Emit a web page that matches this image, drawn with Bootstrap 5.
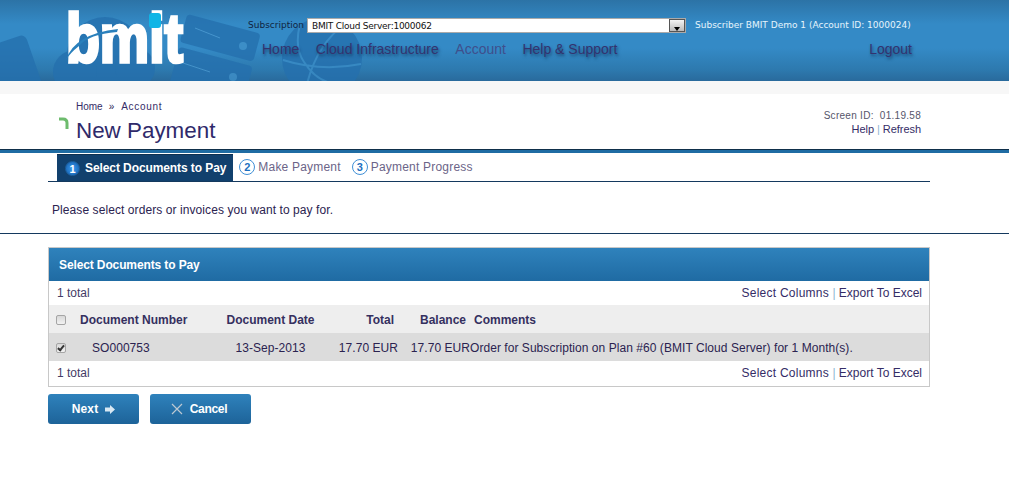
<!DOCTYPE html>
<html lang="en">
<head>
    <meta charset="UTF-8">
    <meta name="viewport" content="width=device-width, initial-scale=1.0">
    <title>New Payment</title>
    <link rel="stylesheet" href="https://cdn.jsdelivr.net/npm/bootstrap@5.3.0/dist/css/bootstrap.min.css">
    <style>
        body { font-family: "Liberation Sans", Arial, sans-serif; font-size: 12px; color: #2b2350; background: #fff; }
        a { color: #342c66; text-decoration: none; }
        .top-head { position: relative; height: 81px; background: linear-gradient(#2c73a6 0, #348ac6 24px, #348ac6 48px, #2d79ae 70px, #296a9c 81px); overflow: hidden; }
        .top-art { position: absolute; left: 0; top: 0; }
        .top-logo { position: relative; width: 248px; flex: none; }
        .top-right { position: relative; flex: 1; }
        .sub-line { height: 17px; margin-top: 17px; font-family: "DejaVu Sans", sans-serif; font-size: 9px; white-space: nowrap; }
        .sub-label { color: #10243f; width: 59px; }
        .sub-select { width: 379px; height: 15px; background: #fff; border: 1px solid #aaa; color: #111; padding-left: 4px; line-height: 12px; letter-spacing: -.25px; }
        .sub-arrow { width: 16px; height: 13px; background: linear-gradient(#f4f4f4, #bbb); border: 1px solid #555; margin-left: auto; position: relative; }
        .sub-arrow::after { content: ""; position: absolute; left: 4px; top: 7px; border: 3px solid transparent; border-top: 4px solid #000; border-bottom: 0; }
        .sub-user { color: #e6f4fc; margin-left: 9px; }
        .top-menu { margin-top: 5px; padding-left: 14px; width: 664px; font-size: 14px; }
        .top-menu a { color: #33336f; text-shadow: 1px 2px 3px rgba(18, 58, 96, .8); margin-right: 16.5px; }
        .top-menu a.now { color: #3f4f8c; text-shadow: none; }
        .top-menu a.out { margin-left: auto; margin-right: 0; }
        .strip { height: 13px; background: #f7f7f7; }
        .page-head { height: 55px; padding-left: 76px; padding-right: 88px; }
        .crumbs { font-size: 10px; padding-top: 6px; line-height: 13px; }
        .crumb-sep { margin: 0 7px 0 6px; }
        .crumb-end { letter-spacing: .7px; }
        .page-name { font-size: 22.4px; line-height: 28px; margin: 4px 0 0; font-weight: 400; color: #2f2a6a; }
        .spin { position: absolute; left: 59px; top: 117px; }
        .screen-id { text-align: right; font-size: 10px; padding-top: 15px; color: #55556a; line-height: 14px; letter-spacing: .28px; }
        .screen-links { font-size: 11px; letter-spacing: -.05px; line-height: 13px; }
        .sep { color: #8fb6d2; }
        .blue-rule { height: 4px; background: #1f6ca3; border-top: 1px solid #0f2f4a; }
        .steps { margin: 1px 79px 0 48px; height: 28px; border-bottom: 1px solid #14395e; padding-left: 9px; }
        .step { height: 27px; display: flex; align-items: center; gap: 3px; color: #6b6488; margin-right: 11px; letter-spacing: .2px; padding-bottom: 2px; }
        .step.on { background: #11406d; border-top: 1px solid #0e3050; color: #fff; font-weight: 700; padding: 0 7px 0 8px; gap: 5px; margin-right: 6px; letter-spacing: -.09px; }
        .step-num { width: 16px; height: 16px; border-radius: 50%; border: 1px solid #3f8fd6; background: #fff; color: #1a6fc0; font-size: 11px; font-weight: 700; line-height: 14px; text-align: center; letter-spacing: 0; }
        .step.on .step-num { width: 15px; height: 15px; background: radial-gradient(#3a9cf0, #125aa8); color: #fff; border-color: #1b5f9e; }
        .intro { height: 52px; padding: 21px 0 0 52px; line-height: 14px; border-bottom: 1px solid #14395e; letter-spacing: .08px; }
        .doc-panel { margin: 13px 79px 0 48px; border: 1px solid #c8c8c8; }
        .doc-title { height: 33px; background: linear-gradient(#2f82bc, #1f6ba3); color: #fff; font-weight: 700; line-height: 34px; padding-left: 10px; letter-spacing: -.12px; }
        .doc-bar { height: 24px; padding: 0 7px 0 8px; line-height: 24px; color: #443c66; }
        .doc-bar.last { height: 25px; }
        .doc-wide { letter-spacing: .25px; }
        .doc-grid { --bs-table-bg: transparent; margin: 0; table-layout: fixed; font-size: 12px; color: inherit; }
        .doc-grid th, .doc-grid td { padding: 1px 0 0; border: 0; vertical-align: middle; white-space: nowrap; }
        .doc-grid thead tr { height: 28px; background: #eeeeee; color: #35305f; }
        .doc-grid thead th.text-end { padding-right: 4px; }
        .doc-grid tbody tr { height: 28px; background: #dcdcdc; letter-spacing: .05px; }
        .doc-check { width: 10px; height: 10px; margin: 0 0 0 7px; display: block; appearance: none; border: 1px solid #a5a5a5; border-radius: 2px; background: linear-gradient(#d8d8d8, #f2f2f2); position: relative; }
        .doc-check:checked::after { content: ""; position: absolute; left: 2px; top: 0; width: 4px; height: 7px; border: solid #333; border-width: 0 2px 2px 0; transform: rotate(40deg); }
        .doc-so { padding-left: 12px !important; }
        .doc-actions { margin: 7px 0 0 48px; gap: 11px; }
        .act-btn { height: 30px; border-radius: 3px; background: linear-gradient(#2f82bc, #1d6399); color: #fff; font-weight: 700; border: 0; padding: 0; display: flex; align-items: center; justify-content: center; gap: 7px; font-size: 12px; }
        .btn-next { width: 91px; letter-spacing: .15px; }
        .btn-stop { width: 101px; letter-spacing: -.3px; padding-right: 3px; }
    </style>
</head>
<body>
    <!-- header -->
    <div class="top-head d-flex">
        <svg class="top-art" width="1009" height="81" fill="#2570ae" opacity=".8">
            <rect x="-40" y="34" width="65" height="70" rx="6" transform="rotate(-19 25 34)"/>
            <circle cx="105" cy="55" r="38"/><circle cx="75" cy="72" r="22"/><circle cx="135" cy="68" r="20"/>
            <g transform="rotate(15 187 15)"><rect x="187" y="14" width="76" height="29" rx="4"/></g>
            <g transform="rotate(15 180 48)"><rect x="179" y="47" width="76" height="40" rx="4"/></g>
            <path d="M195 28l25 10M180 62l30 10" stroke="#4a98cf" stroke-width="1" fill="none"/>
            <circle cx="243" cy="46" r="4" fill="#3f8fc8"/><circle cx="233" cy="77" r="4" fill="#3f8fc8"/>
            <circle cx="322" cy="58" r="40"/>
            <path d="M283 60q38 12 78 4M345 24q-28 20 -38 60M300 24q-6 24 4 38q14 22 36 22" stroke="#3a8cc6" stroke-width="2" fill="none"/>
        </svg>
        <div class="top-logo">
            <svg width="248" height="81">
                <text x="66" y="62" font-family="Liberation Sans" font-weight="700" font-size="68" fill="#fff" stroke="#fff" stroke-width="3.500" textLength="117" lengthAdjust="spacingAndGlyphs">bmit</text>
                <rect x="149" y="13" width="12" height="15" rx="3" fill="#10b5e6"/>
                <path d="M66 60q8-26 52-31l-1 3q-28 2-38 14q-9 7-13 14z" fill="#2a80bc"/>
            </svg>
        </div>
        <div class="top-right">
            <div class="sub-line d-flex align-items-center">
                <span class="sub-label">Subscription</span>
                <div class="sub-select d-flex align-items-center">BMIT Cloud Server:1000062<span class="sub-arrow"></span></div>
                <span class="sub-user">Subscriber BMIT Demo 1 (Account ID: 1000024)</span>
            </div>
            <div class="top-menu d-flex">
                <a href="#">Home</a>
                <a href="#">Cloud Infrastructure</a>
                <a href="#" class="now">Account</a>
                <a href="#">Help &amp; Support</a>
                <a href="#" class="out">Logout</a>
            </div>
        </div>
    </div>
    <div class="strip"></div>

    <div class="page-head d-flex justify-content-between">
        <div>
            <div class="crumbs"><a href="#">Home</a><span class="crumb-sep">»</span><a href="#" class="crumb-end">Account</a></div>
            <h1 class="page-name">New Payment</h1>
        </div>
        <div class="screen-id">
            <div>Screen ID: &nbsp;01.19.58</div>
            <div class="screen-links"><a href="#">Help</a> <span class="sep">|</span> <a href="#">Refresh</a></div>
        </div>
    </div>
    <svg class="spin" width="10" height="12"><path d="M0 2h4q4 0 4 4v6" stroke="#6dbb6d" stroke-width="3" fill="none"/></svg>
    <div class="blue-rule"></div>

    <div class="steps d-flex">
        <div class="step on"><span class="step-num">1</span>Select Documents to Pay</div>
        <div class="step"><span class="step-num">2</span>Make Payment</div>
        <div class="step"><span class="step-num">3</span>Payment Progress</div>
    </div>
    <div class="intro">Please select orders or invoices you want to pay for.</div>

    <div class="doc-panel">
        <div class="doc-title">Select Documents to Pay</div>
        <div class="doc-bar d-flex justify-content-between">
            <span>1 total</span>
            <span><a href="#" class="doc-wide">Select Columns</a> <span class="sep">|</span> <a href="#">Export To Excel</a></span>
        </div>
        <table class="table doc-grid">
            <colgroup><col style="width:31px"><col style="width:123px"><col style="width:135px"><col style="width:60px"><col style="width:72px"><col></colgroup>
            <thead>
                <tr>
                    <th><input type="checkbox" class="doc-check"></th>
                    <th>Document Number</th>
                    <th class="text-center">Document Date</th>
                    <th class="text-end">Total</th>
                    <th class="text-end">Balance</th>
                    <th class="ps-1">Comments</th>
                </tr>
            </thead>
            <tbody>
                <tr>
                    <td><input type="checkbox" class="doc-check" checked></td>
                    <td class="doc-so">SO000753</td>
                    <td class="text-center">13-Sep-2013</td>
                    <td class="text-end">17.70 EUR</td>
                    <td class="text-end">17.70 EUR</td>
                    <td>Order for Subscription on Plan #60 (BMIT Cloud Server) for 1 Month(s).</td>
                </tr>
            </tbody>
        </table>
        <div class="doc-bar last d-flex justify-content-between">
            <span>1 total</span>
            <span><a href="#" class="doc-wide">Select Columns</a> <span class="sep">|</span> <a href="#">Export To Excel</a></span>
        </div>
    </div>

    <div class="d-flex doc-actions">
        <button class="act-btn btn-next">Next
            <svg width="10" height="9"><path d="M0 2.500h5V0l5 4.500-5 4.500V6.500H0z" fill="#d8e8f3"/></svg>
        </button>
        <button class="act-btn btn-stop">
            <svg width="12" height="12"><path d="M1 1l10 10M11 1L1 11" stroke="#bcc8d2" stroke-width="1.200"/></svg>
            Cancel
        </button>
    </div>
</body>
</html>
